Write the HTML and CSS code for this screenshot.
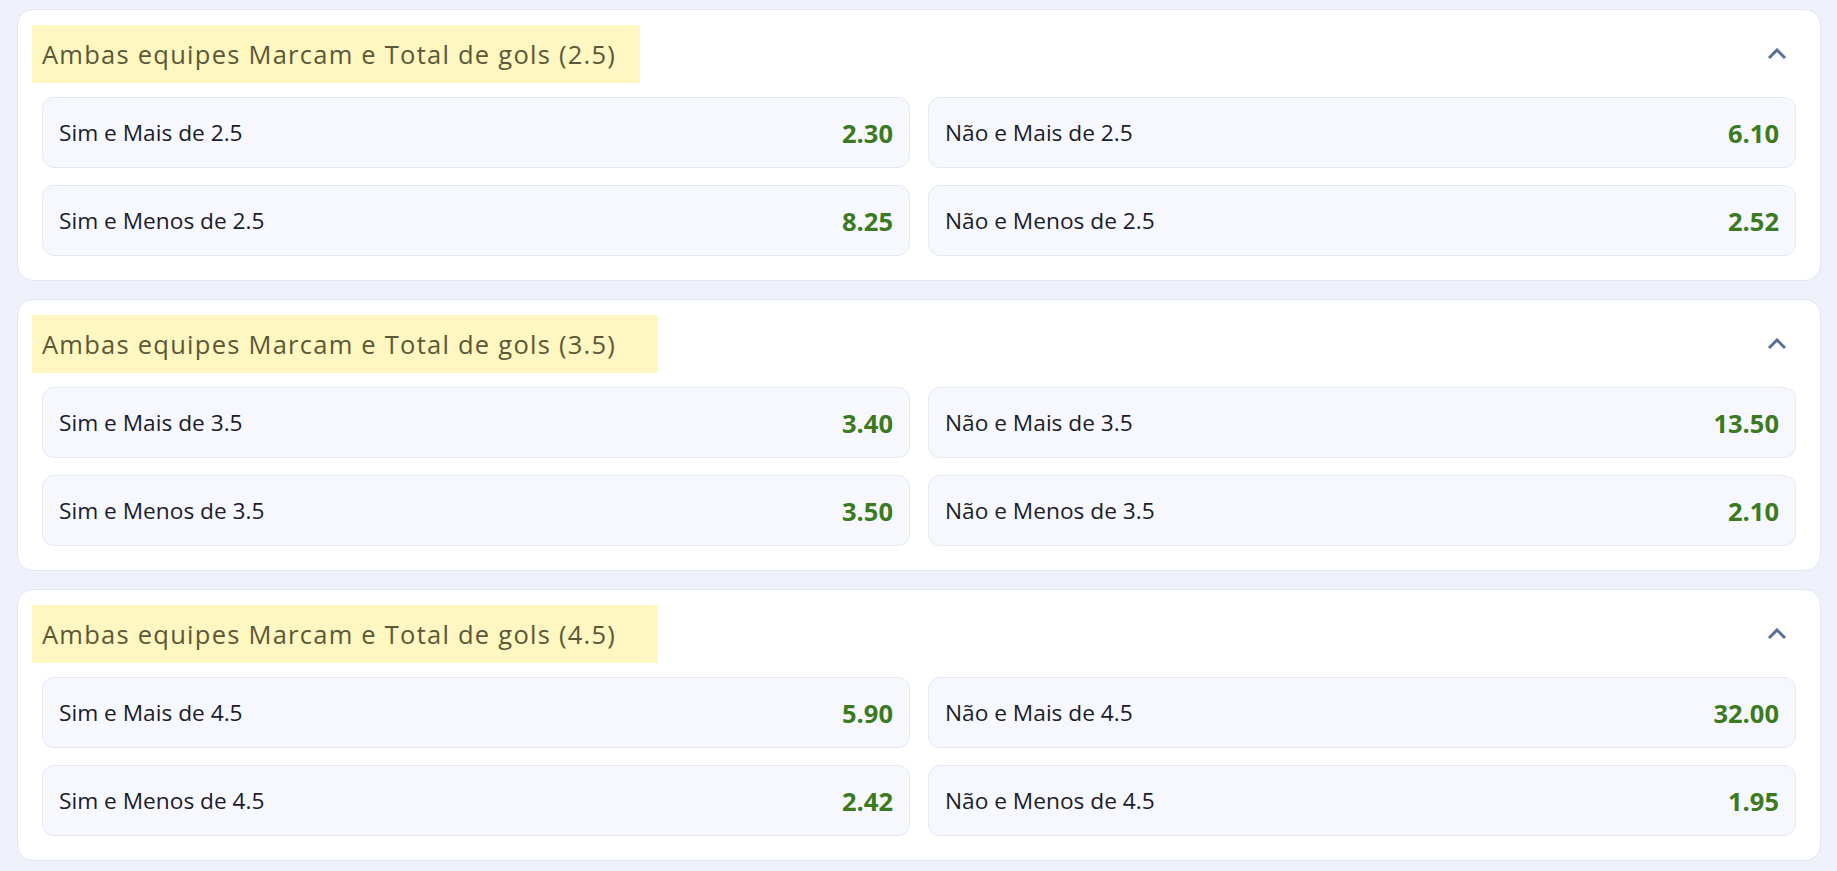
FILE: index.html
```html
<!DOCTYPE html>
<html lang="pt">
<head>
    <meta charset="UTF-8">
    <meta name="viewport" content="width=device-width, initial-scale=1.0">
    <title>Ambas equipes Marcam e Total de gols</title>
    <link rel="stylesheet" href="styles.css">
</head>
<body>
    <div class="market">
        <div class="market-head">
            <span class="market-title">Ambas equipes Marcam e Total de gols (2.5)</span>
            <svg class="chevron" width="20" height="12" viewBox="0 0 20 12"><polyline points="2,10 10,2 18,10" /></svg>
        </div>
        <div class="odds-grid">
            <div class="odd"><span class="odd-name">Sim e Mais de 2.5</span><span class="odd-value">2.30</span></div>
            <div class="odd"><span class="odd-name">Não e Mais de 2.5</span><span class="odd-value">6.10</span></div>
            <div class="odd"><span class="odd-name">Sim e Menos de 2.5</span><span class="odd-value">8.25</span></div>
            <div class="odd"><span class="odd-name">Não e Menos de 2.5</span><span class="odd-value">2.52</span></div>
        </div>
    </div>

    <div class="market">
        <div class="market-head">
            <span class="market-title market-title-wide">Ambas equipes Marcam e Total de gols (3.5)</span>
            <svg class="chevron" width="20" height="12" viewBox="0 0 20 12"><polyline points="2,10 10,2 18,10" /></svg>
        </div>
        <div class="odds-grid">
            <div class="odd"><span class="odd-name">Sim e Mais de 3.5</span><span class="odd-value">3.40</span></div>
            <div class="odd"><span class="odd-name">Não e Mais de 3.5</span><span class="odd-value">13.50</span></div>
            <div class="odd"><span class="odd-name">Sim e Menos de 3.5</span><span class="odd-value">3.50</span></div>
            <div class="odd"><span class="odd-name">Não e Menos de 3.5</span><span class="odd-value">2.10</span></div>
        </div>
    </div>

    <div class="market">
        <div class="market-head">
            <span class="market-title market-title-wide">Ambas equipes Marcam e Total de gols (4.5)</span>
            <svg class="chevron" width="20" height="12" viewBox="0 0 20 12"><polyline points="2,10 10,2 18,10" /></svg>
        </div>
        <div class="odds-grid">
            <div class="odd"><span class="odd-name">Sim e Mais de 4.5</span><span class="odd-value">5.90</span></div>
            <div class="odd"><span class="odd-name">Não e Mais de 4.5</span><span class="odd-value">32.00</span></div>
            <div class="odd"><span class="odd-name">Sim e Menos de 4.5</span><span class="odd-value">2.42</span></div>
            <div class="odd"><span class="odd-name">Não e Menos de 4.5</span><span class="odd-value">1.95</span></div>
        </div>
    </div>
</body>
</html>
```

FILE: styles.css
```css
body {
    margin: 0;
    padding: 9px 16px 0 17px;
    background: #eef1fa;
    font-family: "Open Sans", "Noto Sans", sans-serif;
    color: #1b1b29;
}
.market {
    background: #fff;
    border: 1px solid #e2e7f5;
    border-radius: 16px;
    padding: 0 24px 24px;
    margin-bottom: 18px;
}
.market-head {
    display: flex;
    align-items: center;
    justify-content: space-between;
    margin: 15px 9px 14px -10px;
}
.market-title {
    display: inline-block;
    height: 58px;
    line-height: 58px;
    padding: 0 24px 0 10px;
    background: #fff7c1;
    color: #5b5836;
    font-size: 25.5px;
    letter-spacing: 1.25px;
}
.market-title-wide {
    padding-right: 42px;
}
.chevron polyline {
    fill: none;
    stroke: #5a6e9b;
    stroke-width: 3;
}
.odds-grid {
    display: grid;
    grid-template-columns: 1fr 1fr;
    gap: 17px 18px;
}
.odd {
    display: flex;
    align-items: center;
    justify-content: space-between;
    box-sizing: border-box;
    height: 71px;
    padding: 0 16px 0 16px;
    background: #f6f8fd;
    border: 1px solid #e3e8f6;
    border-radius: 12px;
}
.odd-name {
    font-size: 22.7px;
}
.odd-value {
    font-size: 25.5px;
    font-weight: bold;
    color: #3b7a1e;
}
```
